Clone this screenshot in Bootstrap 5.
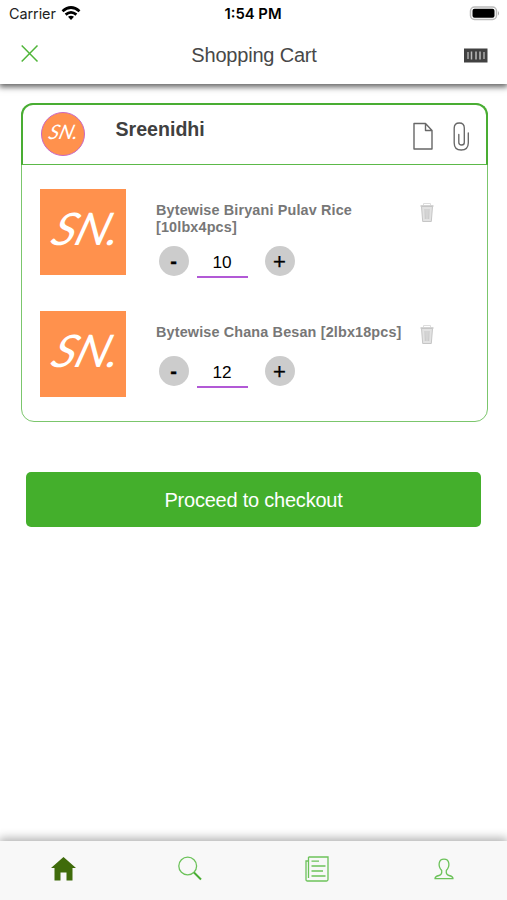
<!DOCTYPE html>
<html lang="en">
<head>
<meta charset="utf-8">
<meta name="viewport" content="width=device-width, initial-scale=1">
<title>Shopping Cart</title>
<link href="https://cdn.jsdelivr.net/npm/bootstrap@5.3.0/dist/css/bootstrap.min.css" rel="stylesheet">
<style>
body{font-family:"Liberation Sans",Arial,sans-serif;height:900px;overflow:hidden;background:#fff;color:#000}
svg{display:block;flex:none}
.top-area{height:84px;background:#fff;box-shadow:0 2px 6px 1px rgba(0,0,0,.62);clip-path:inset(0 0 -14px 0)}
.status-bar{height:28px;padding:0 7px 0 9px;font-family:Inter,sans-serif;font-size:14px;line-height:28px}
.status-bar .side{width:100px}
.carrier{font-size:14.4px;letter-spacing:-.05px;color:#222}
.clock{font-weight:600;font-size:14.8px;letter-spacing:0;margin-left:-3px}
.title-bar{height:56px;padding:0 19px 0 21px}
.close-icon{overflow:visible}
.title-bar h1{font-size:20px;color:#484848;line-height:24px;letter-spacing:-.2px;margin:-2px 0 0 -2px}
.cart-box{margin:18.5px 19.5px 0 20.5px;height:319px;border:1.5px solid #7bc66c;border-radius:13px}
.vendor-row{height:62px;margin:-1px -1px 0;border:2px solid #49ad33;border-bottom:1px solid #5cb949;border-radius:12px 12px 0 0;padding:0 16px 0 18px}
.logo-tile{display:flex;justify-content:center;background:#ff914d;color:#fff;font-family:Lato,sans-serif;font-style:italic}
.logo-tile span{display:block;transform:translateX(3.5px) skewX(-18deg) scaleX(1.04)}
.logo-round{width:44px;height:44px;border:1.5px solid #c968c4;border-radius:50%;font-size:20px;line-height:37px}
.logo-round span{transform:translateX(1px) skewX(-16deg)}
.logo-square{width:86px;height:86px;font-size:45px;line-height:78px;letter-spacing:-.5px}
.vendor-name{font-size:19.6px;font-weight:700;color:#404040;margin:0 0 8px 31px}
.item-row{height:86px;margin-bottom:36px}
.item-list{padding:24px 18px 0}
.item-info{width:263px;margin-left:30.5px;padding-top:13.5px}
.item-name{font-size:14.4px;line-height:17px;font-weight:700;color:#777;letter-spacing:.15px}
.stepper{margin:10px 0 0 2.5px}
.second .stepper{margin-top:15px}
.step-btn{width:30px;height:30px;border-radius:50%;background:#ccc;font-size:22px;line-height:32px;border:0;padding:0;color:#000;text-align:center;-webkit-text-stroke:.3px #000}
.minus{font-weight:700;line-height:28px;font-size:20px}
.qty{width:51px;height:32px;margin:0 17px 0 8px;border-bottom:2px solid #b259d6;font-size:17.2px;line-height:33px;text-align:center}
.trash-icon{margin-top:13px}
.checkout{margin:50.5px 26px 0;height:54.5px;border:0;border-radius:5px;background:#44af2c;color:#fff;font-size:20px;letter-spacing:-.22px;padding-top:7px}
.checkout:hover{background:#44af2c;color:#fff}
.tab-bar{height:59px;background:#f8f8f8;box-shadow:0 -2px 9px 1px rgba(0,0,0,.3);padding:0 0 4px}
.tab-bar a{color:#6cc25a}
</style>
</head>
<body class="d-flex flex-column">
<header class="top-area">
  <div class="status-bar d-flex align-items-center justify-content-between">
    <div class="side d-flex align-items-center"><span class="carrier">Carrier</span>
      <svg width="20" height="15" viewBox="0 0 20 15" fill="none" stroke="#000" stroke-width="2.7" style="margin-left:5.5px;margin-top:-2px"><path d="M1.5 5.3Q10-2.3 18.5 5.3M4.6 8.6Q10 4 15.4 8.6"/><path d="M7 10.8Q10 8.7 13 10.8L10 14Z" fill="#000" stroke="none"/></svg>
    </div>
    <span class="clock">1:54 PM</span>
    <div class="side d-flex justify-content-end"><svg width="31" height="15" viewBox="0 0 31 15" style="margin-top:-2px"><rect x="1.5" y="1" width="26" height="12.5" rx="4" fill="#fff" stroke="#bbb" stroke-width="1.5"/><rect x="3.5" y="2.8" width="22" height="9" rx="2" fill="#000"/><path d="M29 5q2 2.3 0 4.6Z" fill="#aaa"/></svg></div>
  </div>
  <div class="title-bar d-flex align-items-center justify-content-between">
    <svg class="close-icon" width="25" height="18" viewBox="0 0 25 18" fill="none" stroke="#50b53a" stroke-width="1.5"><path d="M.7-1.5 16.5 14.5M16.5-1.5.7 14.5"/></svg>
    <h1 class="fw-normal">Shopping Cart</h1>
    <svg width="24" height="15" viewBox="0 0 24 15" style="margin-top:-2px"><path d="M0 .5h23.5v14H0z" fill="#414141"/><g fill="none" stroke="#ddd"><path d="M4 4v7M20 4v7"/><path d="M7.5 3.5v8M12 3.5v8M16 3.5v8" stroke="#bbb" stroke-width="1.5"/></g></svg>
  </div>
</header>
<main class="flex-grow-1 d-flex flex-column">
  <section class="cart-box">
    <div class="vendor-row d-flex align-items-center">
      <div class="logo-tile logo-round"><span>SN.</span></div>
      <div class="vendor-name">Sreenidhi</div>
      <div class="ms-auto d-flex align-items-center pt-1">
        <svg width="20" height="28" viewBox="0 0 20 28" fill="none" stroke="#676767" stroke-width="1.4" stroke-linejoin="round"><path d="M1 1.5h11.5L19 8.5V27H1ZM12.5 1.5v7H19"/></svg>
        <svg width="17" height="29" viewBox="0 0 17 29" fill="none" stroke="#676767" stroke-width="1.35" stroke-linecap="round" style="margin-left:20px"><path d="M11.3 7V20.5Q11.3 23 8.6 23T5.8 20.5V12.5M11.3 14V6Q11.3 1 6.3 1T1.2 6V21Q1.2 28 8.2 28T15.3 21V11"/></svg>
      </div>
    </div>
    <div class="item-list">
      <article class="item-row d-flex">
        <div class="logo-tile logo-square"><span>SN.</span></div>
        <div class="item-info"><div class="item-name">Bytewise Biryani Pulav Rice<br>[10lbx4pcs]</div>
          <div class="stepper d-flex"><button class="step-btn minus">-</button><div class="qty">10</div><button class="step-btn">+</button></div></div>
        <svg class="trash-icon" width="16" height="21" viewBox="0 0 16 21" fill="#e2e2e2" stroke="#c6c6c6"><path d="M4.5 3V1.5h7V3" fill="none" stroke="#ddd"/><path d="M2.5 4.5h11l-1.2 15H3.7Z"/><path d="M1.5 4h13" stroke-width="1.5"/><path d="M6 7l.3 10M8 7v10M10 7l-.3 10"/></svg>
      </article>
      <article class="item-row second d-flex">
        <div class="logo-tile logo-square"><span>SN.</span></div>
        <div class="item-info"><div class="item-name text-nowrap">Bytewise Chana Besan [2lbx18pcs]</div>
          <div class="stepper d-flex"><button class="step-btn minus">-</button><div class="qty">12</div><button class="step-btn">+</button></div></div>
        <svg class="trash-icon" width="16" height="21" viewBox="0 0 16 21" fill="#e2e2e2" stroke="#c6c6c6"><path d="M4.5 3V1.5h7V3" fill="none" stroke="#ddd"/><path d="M2.5 4.5h11l-1.2 15H3.7Z"/><path d="M1.5 4h13" stroke-width="1.5"/><path d="M6 7l.3 10M8 7v10M10 7l-.3 10"/></svg>
      </article>
    </div>
  </section>
  <button class="btn checkout">Proceed to checkout</button>
</main>
<nav class="tab-bar row g-0 align-items-center">
  <a class="col d-flex justify-content-center" href="#" aria-label="Home"><svg width="25" height="24" viewBox="0 0 25 24"><path d="M12.5 0 25 11H21.5V23.5H15.5V15.5H9.5V23.5H3.5V11H0Z" fill="#3f6b0b"/></svg></a>
  <a class="col d-flex justify-content-center" href="#" aria-label="Search"><svg width="24" height="25" viewBox="0 0 24 25" fill="none" stroke="currentColor"><circle cx="9.7" cy="10" r="8.9" stroke-width="1.3"/><path d="m16 16.5 7 7" stroke-width="2" stroke="#49ad33"/></svg></a>
  <a class="col d-flex justify-content-center" href="#" aria-label="Orders"><svg width="24" height="26" viewBox="0 0 24 26" fill="none" stroke="currentColor" stroke-width="1.3"><path d="M3.5 1H23V23.5Q23 25 21.5 25H2.5Q1 25 1 23.5V5H3.5V22M3.5 1V22M6.5 5.2H14M6.5 10H20.5M6.5 15H18M6.5 20H20.5"/></svg></a>
  <a class="col d-flex justify-content-center" href="#" aria-label="Profile"><svg width="20" height="22" viewBox="0 0 20 22" fill="none" stroke="currentColor" stroke-width="1.3" stroke-linejoin="round"><path d="M7.7 12.5C3.5 8 4.5 1.2 10 1.2S16.5 8 12.3 12.5Q11.8 16.8 15 17.5Q19 18.3 19 20.7H1Q1 18.3 5 17.5Q8.2 16.8 7.7 12.5Z"/></svg></a>
</nav>
<script src="https://cdn.jsdelivr.net/npm/bootstrap@5.3.0/dist/js/bootstrap.bundle.min.js"></script>
</body>
</html>
